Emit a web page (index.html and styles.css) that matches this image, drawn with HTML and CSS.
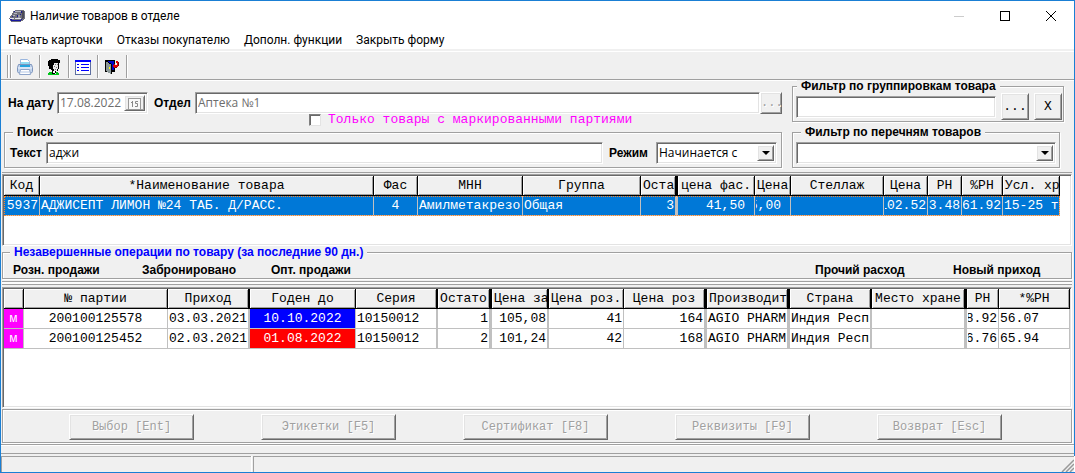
FILE: index.html
```html
<!DOCTYPE html>
<html lang="ru">
<head>
<meta charset="utf-8">
<title>Наличие товаров в отделе</title>
<link rel="stylesheet" href="styles.css">
</head>
<body>
<div class="window">
  <header class="titlebar">
    <svg class="app-icon" width="17" height="13" viewBox="0 0 17 13" shape-rendering="crispEdges" aria-hidden="true">
      <path d="M6 0h9v1h1v8h-1v1h-1v1h-2v1H2v-1H1V9H0V8h1V6h1V5h1V3h1V1h2z" fill="#70707c"/>
      <path d="M6 1h6v1H6zM5 3h3v1H5zM4 5h2v1H4z" fill="#b4b4c0"/>
      <path d="M13 1h2v7h-1v1h-1z" fill="#4c4c58"/>
      <path d="M5 1h1v1H5zM12 1h1v2h-1zM11 4h1v1h-1zM8 5h1v2H8zM3 6h1v1H3z" fill="#1c1c90"/>
      <path d="M9 5h2v3H9z" fill="#9a9aa6"/>
      <path d="M1 8h4v1H1zM6 8h6v1H6z" fill="#e4e4f0"/>
      <path d="M1 9h2v1H1zM2 10h10v1H2zM12 9h1v1h-1z" fill="#1515a0"/>
    </svg>
    <h1 class="title">Наличие товаров в отделе</h1>
    <div class="caption-buttons">
      <button class="caption" aria-label="Свернуть" disabled><svg width="12" height="12" viewBox="0 0 12 12"><path d="M1 6.500h10" stroke="#ccc"/></svg></button>
      <button class="caption" aria-label="Развернуть"><svg width="12" height="12" viewBox="0 0 12 12"><rect x="1.500" y="1.500" width="9" height="9" fill="none" stroke="#000"/></svg></button>
      <button class="caption" aria-label="Закрыть"><svg width="12" height="12" viewBox="0 0 12 12"><path d="M1 1l10 10M11 1L1 11" stroke="#000"/></svg></button>
    </div>
  </header>

  <nav class="menubar">
    <button class="menu">Печать карточки</button>
    <button class="menu">Отказы покупателю</button>
    <button class="menu">Дополн. функции</button>
    <button class="menu">Закрыть форму</button>
  </nav>

  <div class="toolbar">
    <span class="grip"></span>
    <button class="tool" aria-label="Печать">
      <svg width="18" height="18" viewBox="0 0 18 18">
        <path d="M4.500 8V1.500h7l2 2V8" fill="#fff" stroke="#9ab6de"/>
        <path d="M5 4h8v3H5z" fill="#8fdcf4"/>
        <path d="M2.500 6.500h13l1 3v4l-1 1.500h-13L1.500 13.500v-4z" fill="#c3d4ec" stroke="#7f96bd"/>
        <path d="M4 7h10v2H4z" fill="#25a3de"/>
        <path d="M2 10h14" stroke="#eef5ff"/>
        <path d="M4.500 11.500h9l1 5h-11z" fill="#fff" stroke="#8ea5cb"/>
        <path d="M5 14h8" stroke="#b4c7e5"/>
      </svg>
    </button>
    <button class="tool" aria-label="Покупатель">
      <svg width="18" height="18" viewBox="0 0 18 18" shape-rendering="crispEdges">
        <path d="M6 1h7v1h2v3h-1v6h-1v2h-2v2H7v-3H6v-1H4V8H3V3h1V2h2z" fill="#000"/>
        <path d="M9 5h4v6h-1v2H9v-2H8V7h1z" fill="#e8e8e8"/>
        <path d="M10 6h1v1h-1zM12 6h1v1h-1zM9 8h1v1H9zM11 9h1v1h-1zM10 11h1v1h-1z" fill="#777"/>
        <path d="M8 13h2v2H8z" fill="#fff"/>
        <path d="M4 14h3v1h1v1h3v-2h2v1h1v2H3v-2h1z" fill="#00c51b"/>
        <path d="M7 14h1v1h2v1H7z" fill="#000"/>
      </svg>
    </button>
    <button class="tool" aria-label="Список">
      <svg width="18" height="18" viewBox="0 0 18 18" shape-rendering="crispEdges">
        <path d="M1 2h16v15H1z" fill="#5e6fa0"/>
        <path d="M2 4h14v12H2z" fill="#fff"/>
        <path d="M1 2h16v2H1z" fill="#00f"/>
        <path d="M3 6h2v1H3zM3 9h2v1H3zM3 12h2v1H3zM7 6h8v1H7zM7 9h8v1H7zM7 12h8v1H7z" fill="#00f"/>
      </svg>
    </button>
    <button class="tool" aria-label="Выход">
      <svg width="18" height="18" viewBox="0 0 18 18" shape-rendering="crispEdges">
        <path d="M2 2h10v12H2z" fill="#000"/>
        <path d="M5 3h6v9H5z" fill="#0000c8"/>
        <path d="M3 3l5 3v10l-5-3z" fill="#8b9797"/>
        <path d="M3 3l5 3v10" fill="none" stroke="#000"/>
        <path d="M6 9h1v2H6z" fill="#ff0"/>
        <path d="M13 3h2v1h1v4h-1v1h-3v2l-3-3 3-3v2h2V5h-1z" fill="#e30000"/>
        <path d="M15 4h1v4h-1zM12 9h2v1h-2z" fill="#800000"/>
      </svg>
    </button>
  </div>

  <main class="content">
    <form class="filters">
      <div class="main-filters">
        <div class="line">
          <label class="bold date-label" for="date">На дату</label>
          <div class="field date">
            <input id="date" class="text" value="17.08.2022" disabled>
            <button type="button" class="raised calendar" aria-label="Календарь" disabled>
              <svg width="13" height="13" viewBox="0 0 13 13"><rect x=".5" y="1.500" width="12" height="11" fill="#f8f8f8" stroke="#999"/><path d="M4.500 4v6M3 5.500h1.500M10 4.500H7.500v2h2v3H7" fill="none" stroke="#888"/></svg>
            </button>
          </div>
          <label class="bold dept-label" for="dept">Отдел</label>
          <div class="field grow"><input id="dept" class="text" value="Аптека №1" disabled></div>
          <button type="button" class="raised dots-small" disabled>...</button>
        </div>
        <label class="marked"><input type="checkbox" class="check">Только товары с маркированными партиями</label>
        <fieldset class="group search">
          <legend class="bold">Поиск</legend>
          <div class="line">
            <label class="bold text-label" for="query">Текст</label>
            <div class="field grow"><input id="query" class="text" value="аджи"></div>
            <label class="bold mode-label" for="mode">Режим</label>
            <div class="field mode">
              <select id="mode" class="text"><option>Начинается с</option></select>
              <span class="raised arrow"></span>
            </div>
          </div>
        </fieldset>
      </div>
      <div class="side-filters">
        <fieldset class="group by-group">
          <legend class="bold">Фильтр по группировкам товара</legend>
          <div class="line">
            <div class="field grow"><input class="text" aria-label="Фильтр по группировкам товара"></div>
            <button type="button" class="raised square">...</button>
            <button type="button" class="raised square">X</button>
          </div>
        </fieldset>
        <fieldset class="group by-list">
          <legend class="bold">Фильтр по перечням товаров</legend>
          <div class="field">
            <select class="text" aria-label="Фильтр по перечням товаров"><option></option></select>
            <span class="raised arrow"></span>
          </div>
        </fieldset>
      </div>
    </form>

    <div class="grid goods">
      <table>
        <colgroup><col class="w36"><col class="w334"><col class="w44"><col class="w105"><col class="w118"><col class="w37"><col class="w77"><col class="w36"><col class="w93"><col class="w44"><col class="w34"><col class="w41"><col class="w57"></colgroup>
        <thead><tr>
          <th>Код</th><th>*Наименование товара</th><th>Фас</th><th>МНН</th><th>Группа</th><th class="b3">Оста</th><th>цена фас.</th><th>Цена</th><th>Стеллаж</th><th>Цена</th><th>РН</th><th>%РН</th><th>Усл. хр</th>
        </tr></thead>
        <tbody><tr class="selected">
          <td><div class="end">5937</div></td><td>АДЖИСЕПТ ЛИМОН №24 ТАБ. Д/РАСС.</td><td class="center">4</td><td>Амилметакрезо</td><td>Общая</td><td class="b3"><div class="end">3</div></td><td><div class="end money">41,50</div></td><td><div class="end money">5,00</div></td><td></td><td><div class="end">102.52</div></td><td><div class="end">3.48</div></td><td><div class="end">61.92</div></td><td>15-25 т</td>
        </tr></tbody>
      </table>
    </div>

    <fieldset class="group pending">
      <legend class="bold">Незавершенные операции по товару (за последние 90 дн.)</legend>
      <div class="stats bold">
        <span class="stat">Розн. продажи</span><span class="stat">Забронировано</span><span class="stat">Опт. продажи</span>
        <span class="stat other">Прочий расход</span><span class="stat">Новый приход</span>
      </div>
    </fieldset>
    <div class="splitter"></div>

    <div class="grid batches">
      <table>
        <colgroup><col class="w20"><col class="w144"><col class="w82"><col class="w106"><col class="w82"><col class="w54"><col class="w57"><col class="w75"><col class="w83"><col class="w83"><col class="w82"><col class="w95"><col class="w32"><col class="w71"></colgroup>
        <thead><tr>
          <th></th><th>№ партии</th><th class="b2">Приход</th><th>Годен до</th><th class="b2">Серия</th><th class="b3">Остато</th><th class="b2">Цена за</th><th>Цена роз.</th><th class="b3">Цена роз</th><th class="b3">Производит</th><th class="b2">Страна</th><th class="b3">Место хране</th><th>РН</th><th>*%РН</th>
        </tr></thead>
        <tbody>
          <tr><td class="mark">м</td><td class="center">200100125578</td><td class="b2">03.03.2021</td><td class="center valid">10.10.2022</td><td class="b2">10150012</td><td class="b3"><div class="end">1</div></td><td class="b2"><div class="end">105,08</div></td><td><div class="end">41</div></td><td class="b3"><div class="end">164</div></td><td class="b3">AGIO PHARM</td><td class="b2">Индия Респ</td><td class="b3"></td><td><div class="end">8.92</div></td><td>56.07</td></tr>
          <tr><td class="mark">м</td><td class="center">200100125452</td><td class="b2">02.03.2021</td><td class="center expired">01.08.2022</td><td class="b2">10150012</td><td class="b3"><div class="end">2</div></td><td class="b2"><div class="end">101,24</div></td><td><div class="end">42</div></td><td class="b3"><div class="end">168</div></td><td class="b3">AGIO PHARM</td><td class="b2">Индия Респ</td><td class="b3"></td><td><div class="end">6.76</div></td><td>65.94</td></tr>
        </tbody>
      </table>
    </div>

    <div class="actions">
      <button class="raised action short" disabled>Выбор [Ent]</button>
      <button class="raised action" disabled>Этикетки [F5]</button>
      <button class="raised action long" disabled>Сертификат [F8]</button>
      <button class="raised action" disabled>Реквизиты [F9]</button>
      <button class="raised action short" disabled>Возврат [Esc]</button>
    </div>
  </main>
  <div class="footer-gap"></div>
  <footer class="statusbar">
    <div class="pane first"></div>
    <div class="pane last">
      <svg width="13" height="13" viewBox="0 0 13 13" aria-hidden="true"><path d="M1 13L13 1M5 13l8-8M9 13l4-4" stroke="#999" stroke-width="1.500"/></svg>
    </div>
  </footer>
</div>
</body>
</html>
```
FILE: styles.css
```css
* { box-sizing: border-box; }

body {
  margin: 0;
  background: #f0f0f0;
  color: #000;
  font: 12px/14px "Open Sans", "Noto Sans", sans-serif;
}

button, input, select { font: inherit; color: inherit; margin: 0; padding: 0; border: 0; border-radius: 0; }

.window {
  display: flex;
  flex-direction: column;
  min-height: 100vh;
  border: 1px solid #1a7fd4;
}

/* Title bar and menu */
.titlebar { display: flex; align-items: center; height: 30px; padding-left: 8px; background: #fff; }
.title { margin: 0 auto 0 4px; font: 12px/14px Roboto, sans-serif; }
.caption-buttons { display: flex; }
.caption { display: grid; place-items: center; width: 46px; height: 28px; background: none; }
.menubar { display: flex; align-items: center; gap: 14px; height: 18px; padding-left: 7px; background: #fff; font: 12px/14px Roboto, sans-serif; }
.menu { background: none; }

/* Toolbar */
.toolbar {
  display: flex;
  height: 31px;
  padding: 4px 0 1px 6px;
  border-top: 2px solid #f0f0f0;
  border-bottom: 1px solid #a0a0a0;
  box-shadow: inset 0 1px #fff, 0 1px #fff;
}
.grip { width: 4px; border: solid #a0a0a0; border-width: 0 1px; box-shadow: 1px 0 #fff, inset 1px 0 #fff; }
.tool { display: grid; place-items: center; width: 29px; background: none; border-right: 1px solid #a0a0a0; box-shadow: 1px 0 #fff; }

/* Shared controls */
.content { display: flex; flex-direction: column; flex: 1; padding: 0 2px 0 1px; border-bottom: 1px solid #a0a0a0; }
.bold { font: bold 12px/12px "Liberation Sans", Arial, sans-serif; }
.line { display: flex; align-items: center; }
.grow { flex: 1; min-width: 0; }
.field {
  display: flex;
  height: 22px;
  background: #fff;
  border: 1px solid;
  border-color: #a0a0a0 #fff #fff #a0a0a0;
  box-shadow: inset 1px 1px #696969, inset -1px -1px #e3e3e3;
  padding: 2px;
  position: relative;
}
.text { flex: 1; min-width: 0; width: 100%; background: none; appearance: none; outline: 0; }
.text:disabled { color: #6d6d6d; }
.raised {
  background: #f0f0f0;
  border: 1px solid;
  border-color: #fff #696969 #696969 #fff;
  box-shadow: inset 1px 1px #e3e3e3, inset -1px -1px #a0a0a0;
  font-family: "Liberation Mono", "Courier New", monospace;
}
.raised:disabled { color: #a0a0a0; text-shadow: 1px 1px #fff; }
.arrow { position: absolute; right: 2px; top: 2px; bottom: 2px; width: 17px; display: grid; place-items: center; pointer-events: none; }
.arrow::after { content: ""; border: 4px solid transparent; border-top-color: #000; border-bottom: 0; }
.group { min-width: 0; margin: 0; padding: 4px 4px 3px 3px; border: 1px solid #a0a0a0; box-shadow: 1px 1px #fff, inset 1px 1px #fff; }
.group legend { padding: 0 4px; background: #f0f0f0; }

/* Filters */
.filters { display: flex; gap: 10px; padding: 0 8px 4px 2px; border-bottom: 1px solid #a0a0a0; }
.main-filters { flex: 1; min-width: 0; padding-top: 12px; }
.date-label { width: 53px; padding-left: 4px; }
.date { width: 91px; margin-right: 6px; }
.calendar { display: grid; place-items: center; width: 21px; }
.dept-label { width: 41px; }
.dots-small { width: 22px; height: 22px; line-height: 12px; }
.marked {
  display: flex;
  align-items: center;
  gap: 7px;
  height: 12px;
  width: max-content;
  margin-left: 305px;
  color: #f0f;
  font: 13px/12px "Liberation Mono", "Courier New", monospace;
}
.check { appearance: none; width: 12px; height: 12px; background: #fff; border: 1px solid; border-color: #808080 #e3e3e3 #e3e3e3 #808080; box-shadow: inset 1px 1px #696969; }
.search legend { margin-left: 5px; }
.text-label { width: 38px; padding-left: 2px; }
.mode-label { width: 53px; padding-left: 6px; }
.mode { width: 121px; }
.side-filters { display: flex; flex-direction: column; gap: 4px; width: 272px; }
.by-group { padding: 1px 1px 1px 3px; }
.by-group legend { margin-left: 1px; }
.square { width: 28px; height: 27px; margin-left: 5px; font-size: 13px; }
.by-list { margin-right: 4px; padding: 4px 3px 3px; }
.by-list legend { margin-left: 5px; }

/* Data grids */
.grid {
  overflow: hidden;
  margin-top: 1px;
  background: #fff;
  border: 1px solid;
  border-color: #a0a0a0 #fff #fff #a0a0a0;
  box-shadow: inset 1px 1px #696969, inset -1px -1px #e3e3e3;
  padding: 1px;
  font: 13px/18px "Liberation Mono", "Courier New", monospace;
}
.goods { height: 72px; }
.batches { flex: 1; margin-top: 0; }
table { table-layout: fixed; width: min-content; border-collapse: separate; border-spacing: 0; }
th, td { height: 20px; padding: 0 1px; overflow: hidden; white-space: nowrap; border: solid #c0c0c0; border-width: 0 1px 1px 0; font-weight: 400; text-align: left; }
th { padding: 0 2px; background: #f0f0f0; border-color: #000; text-align: center; box-shadow: inset 1px 1px #fff, inset -1px -1px #a0a0a0; }
.b2 { border-right-width: 2px; }
.b3 { border-right-width: 3px; }
.center { text-align: center; }
.end { display: flex; justify-content: flex-end; overflow: hidden; }
.money { padding-right: 8px; }
.selected { background: #0078d7; color: #fff; outline: 1px dotted #ff8728; outline-offset: -1px; }
.mark { background: #f0f; color: #fff; text-align: center; }
.valid { background: #00f; color: #fff; }
.expired { background: #f00; color: #fff; }
.w20 { width: 20px; } .w32 { width: 32px; } .w34 { width: 34px; } .w36 { width: 36px; }
.w37 { width: 37px; } .w41 { width: 41px; } .w44 { width: 44px; } .w54 { width: 54px; }
.w57 { width: 57px; } .w71 { width: 71px; } .w75 { width: 75px; } .w77 { width: 77px; }
.w82 { width: 82px; } .w83 { width: 83px; } .w93 { width: 93px; } .w95 { width: 95px; }
.w105 { width: 105px; } .w106 { width: 106px; } .w118 { width: 118px; } .w144 { width: 144px; }
.w334 { width: 334px; }

/* Pending operations */
.pending { padding: 6px 0 1px 10px; }
.pending legend { margin-left: -3px; color: #00f; }
.stats { display: flex; padding-bottom: 1px; }
.stat { width: 129px; }
.other { width: 138px; margin-left: auto; }
.pending .stat:last-child { width: 118px; }
.splitter { height: 4px; margin: 2px 0; background: #fcfcfc; border: solid #a0a0a0; border-width: 1px 0; }

/* Bottom buttons */
.actions { display: flex; gap: 67px; margin: 1px 0; padding: 4px 66px 2px; border: 1px solid #a0a0a0; box-shadow: inset 1px 1px #fff, 1px 1px #fff; }
.action { width: 135px; height: 26px; }
.short { width: 125px; }
.long { width: 145px; }
.footer-gap { height: 9px; border-bottom: 1px solid #a0a0a0; box-shadow: inset 0 1px #fff; }

/* Status bar */
.statusbar { display: flex; gap: 2px; padding-top: 2px; }
.pane { height: 16px; border: solid #a0a0a0; border-width: 1px 0 0 1px; box-shadow: 1px 0 #fff; }
.first { width: 250px; }
.last { flex: 1; display: flex; justify-content: flex-end; align-items: flex-end; }
```
